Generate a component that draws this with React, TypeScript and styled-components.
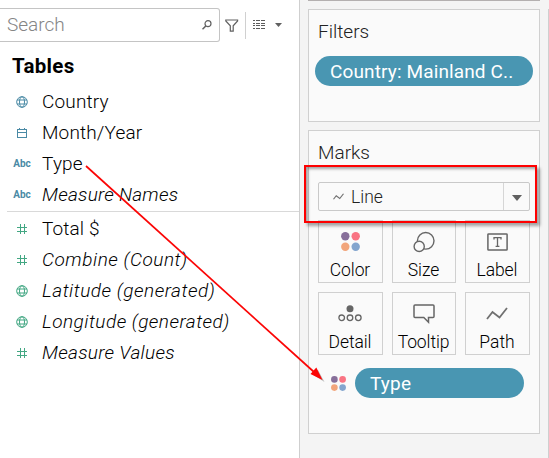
import React from "react";
import styled, { createGlobalStyle } from "styled-components";

const GlobalStyle = createGlobalStyle`
  * { box-sizing: border-box; }
  body { margin: 0; overflow: hidden; background: #fff; font-family: Roboto, "Liberation Sans", sans-serif; }
  svg { display: block; flex: none; }
`;

const Page = styled.main`
  position: relative;
  display: flex;
  width: 549px;
  height: 458px;
  overflow: hidden;
`;

const DataPane = styled.aside`
  width: 300px;
  border-right: 1px solid #cfcfcf;
  padding-top: 8px;
`;

const SearchRow = styled.div`
  display: flex;
  align-items: center;
  height: 34px;
`;

const SearchBox = styled.div`
  display: flex;
  align-items: center;
  justify-content: space-between;
  width: 220px;
  height: 34px;
  padding: 0 7px 1px 7px;
  border: 1px solid #c4c4c4;
  border-left: 0;
  border-radius: 0 3px 3px 0;
`;

const Toolbar = styled.div`
  display: flex;
  align-items: center;
  padding-left: 5px;
`;

const ToolDivider = styled.span`
  width: 1px;
  height: 27px;
  margin: 0 7px 0 6px;
  background: #d0d0d0;
`;

const ListButton = styled.span`
  display: flex;
  align-items: center;
  gap: 10px;
`;

const Label = styled.span<{ $spacing?: number; $size?: number; $color?: string; $italic?: boolean; $weight?: number }>`
  font-size: ${(p) => p.$size ?? 19}px;
  font-weight: ${(p) => p.$weight ?? 300};
  font-style: ${(p) => (p.$italic ? "italic" : "normal")};
  letter-spacing: ${(p) => p.$spacing ?? 0}px;
  color: ${(p) => p.$color ?? "#000"};
  white-space: nowrap;
  line-height: 24px;
`;

const Heading = styled.h2`
  margin: 12px 0 8px 12px;
  font-size: 20.5px;
  font-weight: 700;
  line-height: 24px;
  letter-spacing: 0.3px;
`;

const FieldList = styled.div`
  display: flex;
  flex-direction: column;
`;

const FieldRow = styled.div`
  display: flex;
  align-items: center;
  height: 31px;
`;

const FieldIcon = styled.span<{ $measure?: boolean }>`
  display: flex;
  justify-content: center;
  width: 42px;
  flex: none;
  font-size: 10px;
  font-weight: 700;
  color: ${(p) => (p.$measure ? "#43a783" : "#4a8aa5")};
`;

const IconSlot = styled.span`
  display: flex;
  justify-content: center;
  width: 18px;
  margin-left: 2px;
`;

const FieldDivider = styled.div`
  height: 1px;
  margin: 1px 0 1px 7px;
  background: #d9d9d9;
`;

const ShelfPane = styled.section`
  display: flex;
  flex: 1;
  background: #f4f4f4;
  padding-left: 8px;
`;

const Shelves = styled.div`
  display: flex;
  flex-direction: column;
  width: 232px;
  border-top: 1px solid #b4b0b0;
  padding-top: 8px;
  gap: 8px;
`;

const CanvasEdge = styled.div`
  width: 1px;
  height: 449px;
  margin: 9px 0 0 8px;
  background: #cfcfcf;
`;

const Card = styled.div<{ $height: number }>`
  height: ${(p) => p.$height}px;
  border: 1px solid #d0d0d0;
  background: #fafafa;
  padding-top: 10px;
`;

const CardTitle = styled.div`
  height: 24px;
  padding-left: 9px;
`;

const Pill = styled.div<{ $width: number; $pad: number }>`
  display: flex;
  align-items: center;
  width: ${(p) => p.$width}px;
  height: 30px;
  padding: 1px 0 0 ${(p) => p.$pad}px;
  border-radius: 15px;
  background: #4996b2;
`;

const FilterSlot = styled.div`
  padding: 12px 0 0 6px;
`;

const MarkSelect = styled.div`
  display: flex;
  align-items: center;
  width: 212px;
  height: 29px;
  margin: 17px 0 9px 9px;
  padding-left: 14px;
  gap: 7px;
  border: 1px solid #c9c9c9;
  border-radius: 2px;
`;

const SelectArrow = styled.span`
  display: flex;
  align-items: center;
  justify-content: center;
  width: 26px;
  height: 27px;
  margin-left: auto;
  padding-top: 2px;
  border-left: 1px solid #d6d6d6;
`;

const MarkGrid = styled.div`
  display: grid;
  grid-template-columns: 65px 64px 65px;
  grid-auto-rows: 63px;
  column-gap: 9px;
  row-gap: 9px;
  padding-left: 9px;
`;

const MarkButton = styled.div`
  display: flex;
  flex-direction: column;
  align-items: center;
  border: 1px solid #d0d0d0;
  padding: 4px 1px 0 0;
`;

const MarkIcon = styled.span<{ $drop?: number }>`
  display: flex;
  align-items: center;
  height: 33px;
  padding-top: ${(p) => p.$drop ?? 0}px;
`;

const EncodingRow = styled.div`
  display: flex;
  align-items: center;
  gap: 9px;
  padding: 13px 0 0 22px;
`;

const Highlight = styled.div`
  position: absolute;
  left: 304px;
  top: 165px;
  width: 233px;
  height: 58px;
  border: 2px solid #fe0000;
  box-shadow: 3px 3px 3px rgba(0, 0, 0, 0.35), inset 2px 2px 3px rgba(0, 0, 0, 0.35);
`;

const ArrowLayer = styled.svg`
  position: absolute;
  left: 0;
  top: 0;
`;

const Globe = () => (
  <svg width="12" height="12" viewBox="0 0 12 12" fill="none" stroke="currentColor">
    <circle cx="6" cy="6" r="5.3" />
    <ellipse cx="6" cy="6" rx="2.5" ry="5.3" />
    <path d="M1 4h10M1 8h10" />
  </svg>
);

const Calendar = () => (
  <svg width="12" height="12" viewBox="0 0 12 12" fill="none" stroke="currentColor" shapeRendering="crispEdges">
    <path d="M1.5 2.5h9v8h-9zM1.5 5.5h9M3.5 1v2M8.5 1v2" />
  </svg>
);

const Hash = () => (
  <svg width="12" height="12" viewBox="0 0 12 12" fill="none" stroke="currentColor" shapeRendering="crispEdges">
    <path d="M4.5 1v10M8.5 1v10M1 4.5h10M1 8.5h10" />
  </svg>
);

const Magnifier = () => (
  <svg width="10" height="10" viewBox="0 0 10 10" fill="none" stroke="#606060">
    <circle cx="6" cy="3.7" r="3" strokeWidth="1.2" />
    <path d="M3.8 6L.5 9.3" strokeWidth="1.5" />
  </svg>
);

const Funnel = () => (
  <svg width="14" height="13" viewBox="0 0 14 13" fill="none" stroke="#606060" strokeWidth="1.2">
    <path d="M.8 1h11.8v.9L8.2 6.8v5.4H5.3V6.8L.8 1.9z" />
  </svg>
);

const ListIcon = () => (
  <svg width="12" height="10" viewBox="0 0 12 10" stroke="#5c5c5c" shapeRendering="crispEdges">
    <path d="M0 .5h2M3 .5h4M8 .5h4M0 3.5h2M3 3.5h4M8 3.5h4M0 5.5h2M3 5.5h4M8 5.5h4M0 8.5h2M3 8.5h4M8 8.5h4" />
  </svg>
);

const Caret = ({ width, height }: { width: number; height: number }) => (
  <svg width={width} height={height} viewBox="0 0 10 6" preserveAspectRatio="none" fill="#606060">
    <path d="M0 0h10L5 6z" />
  </svg>
);

const ColorDots = ({ size }: { size: number }) => (
  <svg width={size} height={size} viewBox="0 0 19 19">
    <circle cx="4.3" cy="4.3" r="4.2" fill="#876f9a" />
    <circle cx="14.7" cy="4.3" r="4.2" fill="#f97483" />
    <circle cx="4.3" cy="14.7" r="4.2" fill="#f2a57b" />
    <circle cx="14.7" cy="14.7" r="4.2" fill="#83a5ce" />
  </svg>
);

const SizeIcon = () => (
  <svg width="22" height="22" viewBox="0 0 22 22" fill="#fafafa" stroke="#666" strokeWidth="1.4">
    <circle cx="12.7" cy="9.8" r="8.3" />
    <circle cx="6.2" cy="15.4" r="5.1" />
  </svg>
);

const TextIcon = () => (
  <svg width="21" height="18" viewBox="0 0 21 18" fill="none" stroke="#666">
    <rect x=".9" y=".9" width="19.2" height="16.2" rx=".7" strokeWidth="1.5" />
    <path d="M7 6.5V4.6h7v1.9M10.5 4.6v8.8M8.6 13.4h3.8" strokeWidth="1.3" />
  </svg>
);

const DetailIcon = () => (
  <svg width="24" height="17" viewBox="0 0 24 17" fill="none" stroke="#666" strokeWidth="1.3">
    <circle cx="12" cy="3.8" r="3.5" fill="#666" stroke="none" />
    <circle cx="3.7" cy="12.8" r="2.8" />
    <circle cx="12" cy="12.8" r="2.8" />
    <circle cx="20.3" cy="12.8" r="2.8" />
  </svg>
);

const TooltipIcon = () => (
  <svg width="22" height="20" viewBox="0 0 22 20" fill="none" stroke="#666" strokeWidth="1.5">
    <path d="M2 1h18q1 0 1 1v10.5q0 1-1 1h-4.5v4.7l-4.7-4.7H2q-1 0-1-1V2q0-1 1-1z" />
  </svg>
);

const LineIcon = ({ width, height, stroke }: { width: number; height: number; stroke: number }) => (
  <svg width={width} height={height} viewBox="0 0 22 13" fill="none" stroke="#707070" strokeWidth={stroke}>
    <path d="M1 12l5.5-7 7 5.5L21 1" />
  </svg>
);

type Field = { name: string; icon: React.ReactNode; italic?: boolean; spacing: number };

const dimensions: Field[] = [
  { name: "Country", icon: <Globe />, spacing: 0.15 },
  { name: "Month/Year", icon: <Calendar />, spacing: 0.15 },
  { name: "Type", icon: "Abc", spacing: 0.2 },
  { name: "Measure Names", icon: "Abc", italic: true, spacing: 0.24 },
];

const measures: Field[] = [
  { name: "Total $", icon: <Hash />, spacing: 0.1 },
  { name: "Combine (Count)", icon: <Hash />, italic: true, spacing: 0.53 },
  { name: "Latitude (generated)", icon: <Globe />, italic: true, spacing: 0.52 },
  { name: "Longitude (generated)", icon: <Globe />, italic: true, spacing: 0.48 },
  { name: "Measure Values", icon: <Hash />, italic: true, spacing: 0.28 },
];

const marks = [
  { name: "Color", icon: <ColorDots size={19} />, spacing: -0.1, drop: 0 },
  { name: "Size", icon: <SizeIcon />, spacing: -0.1, drop: 0 },
  { name: "Label", icon: <TextIcon />, spacing: -0.1, drop: 0 },
  { name: "Detail", icon: <DetailIcon />, spacing: -0.1, drop: 0 },
  { name: "Tooltip", icon: <TooltipIcon />, spacing: -0.1, drop: 0 },
  { name: "Path", icon: <LineIcon width={22} height={13} stroke={1.8} />, spacing: 0, drop: 0 },
];

const Fields = ({ items, measure }: { items: Field[]; measure?: boolean }) => (
  <FieldList>
    {items.map((f) => (
      <FieldRow key={f.name}>
        <FieldIcon $measure={measure}><IconSlot>{f.icon}</IconSlot></FieldIcon>
        <Label $italic={f.italic} $spacing={f.spacing}>{f.name}</Label>
      </FieldRow>
    ))}
  </FieldList>
);

export default function App() {
  return (
    <Page>
      <GlobalStyle />
      <DataPane>
        <SearchRow>
          <SearchBox>
            <Label $color="#858585">Search</Label>
            <Magnifier />
          </SearchBox>
          <Toolbar>
            <Funnel />
            <ToolDivider />
            <ListButton>
              <ListIcon />
              <Caret width={7} height={4} />
            </ListButton>
          </Toolbar>
        </SearchRow>
        <Heading>Tables</Heading>
        <Fields items={dimensions} />
        <FieldDivider />
        <Fields items={measures} measure />
      </DataPane>
      <ShelfPane>
        <Shelves>
          <Card $height={113}>
            <CardTitle><Label $color="#222">Filters</Label></CardTitle>
            <FilterSlot>
              <Pill $width={218} $pad={15}><Label $color="#fff" $weight={400} $spacing={0.13}>Country: Mainland C..</Label></Pill>
            </FilterSlot>
          </Card>
          <Card $height={304}>
            <CardTitle><Label $color="#222">Marks</Label></CardTitle>
            <MarkSelect>
              <LineIcon width={11} height={7} stroke={2.4} />
              <Label $color="#222" $size={17.5}>Line</Label>
              <SelectArrow><Caret width={10} height={6} /></SelectArrow>
            </MarkSelect>
            <MarkGrid>
              {marks.map((m) => (
                <MarkButton key={m.name}>
                  <MarkIcon $drop={m.drop}>{m.icon}</MarkIcon>
                  <Label $size={17.5} $spacing={m.spacing}>{m.name}</Label>
                </MarkButton>
              ))}
            </MarkGrid>
            <EncodingRow>
              <ColorDots size={15} />
              <Pill $width={169} $pad={15}><Label $color="#fff" $weight={400} $spacing={0.2}>Type</Label></Pill>
            </EncodingRow>
          </Card>
        </Shelves>
        <CanvasEdge />
      </ShelfPane>
      <Highlight />
      <ArrowLayer width="549" height="458" viewBox="0 0 549 458">
        <path d="M312 374l6-4 6.5 12z" fill="#000" opacity="0.25" />
        <path d="M86 166L314 372" stroke="#fb0505" strokeWidth="1.7" />
        <path d="M310.5 374l5.8-6.4L322.5 380z" fill="#fb0505" />
      </ArrowLayer>
    </Page>
  );
}
